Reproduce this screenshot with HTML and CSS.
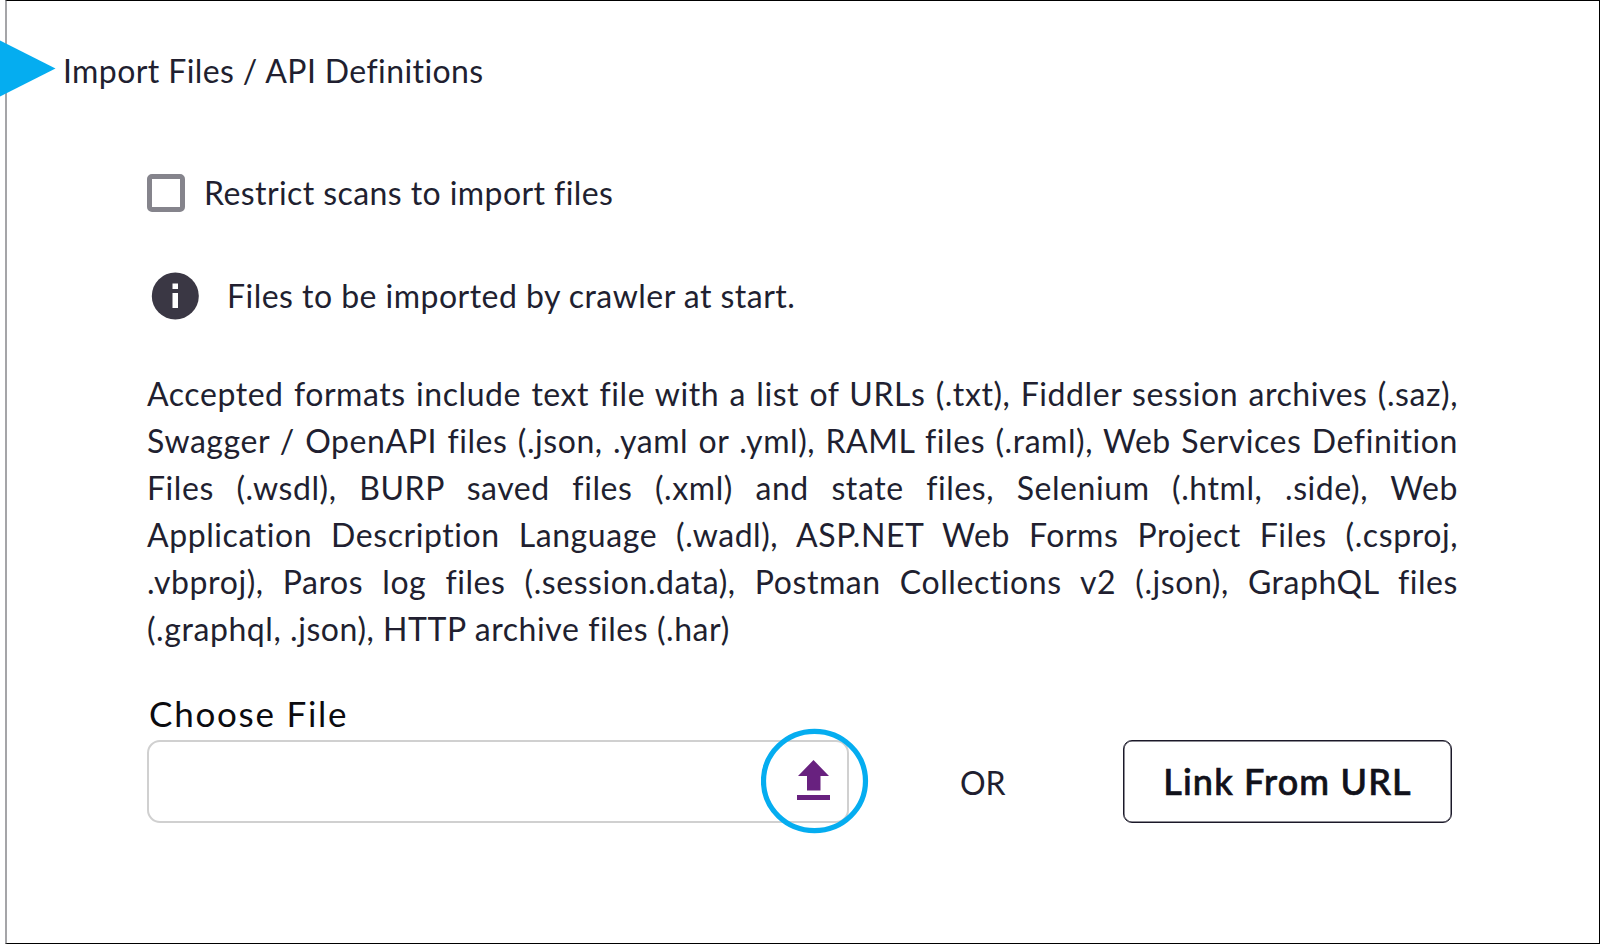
FILE: index.html
```html
<!DOCTYPE html>
<html lang="en">
<head>
    <meta charset="UTF-8">
    <meta name="viewport" content="width=device-width, initial-scale=1.0">
    <title>Import Files / API Definitions</title>
    <link rel="stylesheet" href="styles.css">
</head>
<body>
    <div class="panel">
        <svg class="pointer" width="56" height="58" viewBox="0 0 56 58"><path d="M0 .5L55.5 28.5L0 56.5Z" fill="#05adf0"/></svg>
        <h1 class="title">Import Files / API Definitions</h1>

        <div class="content">
            <label class="restrict">
                <span class="checkbox"></span>
                <span class="restrict-text">Restrict scans to import files</span>
            </label>

            <div class="info">
                <svg width="48" height="49" viewBox="0 0 48 49">
                    <circle cx="24.3" cy="25" r="23.5" fill="#3a3744"/>
                    <path d="M21.5 12.5H27V18H21.5zM21.5 22H27V37H21.5z" fill="#fff"/>
                </svg>
                <span class="info-text">Files to be imported by crawler at start.</span>
            </div>

            <div class="formats">
                <div>Accepted formats include text file with a list of URLs (.txt), Fiddler session archives (.saz),</div>
                <div>Swagger / OpenAPI files (.json, .yaml or .yml), RAML files (.raml), Web Services Definition</div>
                <div>Files (.wsdl), BURP saved files (.xml) and state files, Selenium (.html, .side), Web</div>
                <div>Application Description Language (.wadl), ASP.NET Web Forms Project Files (.csproj,</div>
                <div>.vbproj), Paros log files (.session.data), Postman Collections v2 (.json), GraphQL files</div>
                <div class="last">(.graphql, .json), HTTP archive files (.har)</div>
            </div>

            <div class="choose">Choose File</div>
            <div class="source">
                <div class="file-input">
                    <svg class="upload" width="34" height="42" viewBox="0 0 34 42">
                        <path d="M16.5 0L32 16H23.5V30.5H10V16H1ZM0 35H33V40H0Z" fill="#68217f"/>
                    </svg>
                    <svg class="ring" width="108" height="106" viewBox="0 0 108 106"><ellipse cx="53.5" cy="53" rx="51" ry="49.6" fill="none" stroke="#05adf0" stroke-width="5.2"/></svg>
                </div>
                <span class="or">OR</span>
                <button class="btn">Link From URL</button>
            </div>
        </div>
    </div>
</body>
</html>
```
FILE: styles.css
```css
* {
    box-sizing: border-box;
}
body {
    margin: 0;
    padding-left: 5px;
    background: #fff;
    color: #211f30;
    font-family: Lato, 'Liberation Sans', sans-serif;
    font-size: 32px;
    line-height: 47px;
}
.panel {
    position: relative;
    height: 944px;
    padding: 46px 0 0 56px;
    border: 1px solid #000;
    border-left: 2px solid #a5a5a8;
}
.pointer {
    position: absolute;
    left: -7px;
    top: 39px;
}
.title {
    margin: 0;
    font-size: 32px;
    font-weight: 400;
    letter-spacing: 0.4px;
}
.content {
    width: 1311px;
    margin: 75px 0 0 84px;
}
.restrict {
    display: flex;
    align-items: center;
    gap: 19px;
}
.checkbox {
    width: 38px;
    height: 38px;
    border: 5px solid #85848c;
    border-radius: 5px;
}
.restrict-text {
    letter-spacing: 0.42px;
}
.info {
    display: flex;
    align-items: center;
    gap: 28px;
    margin: 55px 0 0 4px;
}
.info-text {
    padding-bottom: 1px;
    letter-spacing: 0.47px;
}
.formats {
    margin-top: 51px;
    line-height: 46.9px;
    letter-spacing: 0.57px;
}
.formats div {
    white-space: nowrap;
    text-align: justify;
    text-align-last: justify;
}
.formats .last {
    text-align-last: left;
}
.choose {
    margin: 38px 0 0 2px;
    color: #0b0b0f;
    font-size: 35px;
    letter-spacing: 1.75px;
}
.source {
    display: flex;
    align-items: center;
    height: 83px;
    margin-top: 3px;
}
.file-input {
    position: relative;
    width: 702px;
    height: 83px;
    border: 2px solid #d0d0d0;
    border-radius: 13px;
}
.upload {
    position: absolute;
    left: 648px;
    top: 18px;
}
.ring {
    position: absolute;
    left: 612px;
    top: -14px;
}
.or {
    margin-left: 111px;
    padding-top: 2px;
}
.btn {
    width: 329px;
    height: 83px;
    margin-left: auto;
    margin-right: 6px;
    padding: 0 0 2px;
    border: 1px solid #1b1929;
    border-radius: 9px;
    background: #fff;
    box-shadow: inset 0 0 0 0.5px #1b1929;
    color: #11111a;
    font-family: inherit;
    font-size: 36px;
    font-weight: 500;
    letter-spacing: 1.15px;
    -webkit-text-stroke: 0.7px #11111a;
}
```
